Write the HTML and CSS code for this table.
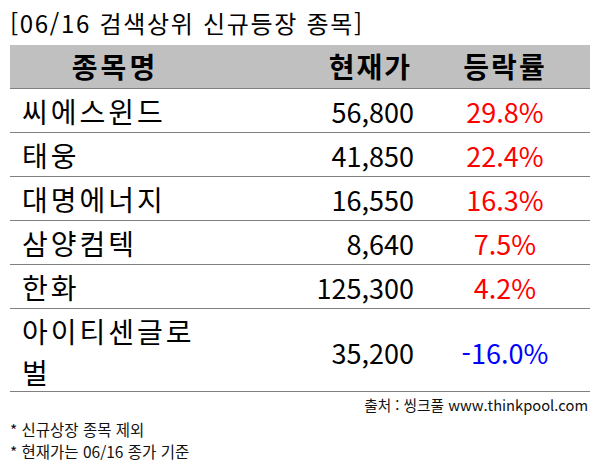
FILE: index.html
```html
<!DOCTYPE html>
<html lang="ko">
<head>
<meta charset="utf-8">
<link rel="stylesheet" href="styles.css">
</head>
<body>
<div class="page">
  <div class="title">[06/16 검색상위 신규등장 종목]</div>
  <div class="table">
    <div class="row head">
      <div class="c name">종목명</div>
      <div class="c price">현재가</div>
      <div class="c pct">등락률</div>
    </div>
    <div class="row">
      <div class="c name">씨에스윈드</div>
      <div class="c price">56,800</div>
      <div class="c pct up">29.8%</div>
    </div>
    <div class="row">
      <div class="c name">태웅</div>
      <div class="c price">41,850</div>
      <div class="c pct up">22.4%</div>
    </div>
    <div class="row">
      <div class="c name">대명에너지</div>
      <div class="c price">16,550</div>
      <div class="c pct up">16.3%</div>
    </div>
    <div class="row">
      <div class="c name">삼양컴텍</div>
      <div class="c price">8,640</div>
      <div class="c pct up">7.5%</div>
    </div>
    <div class="row">
      <div class="c name">한화</div>
      <div class="c price">125,300</div>
      <div class="c pct up">4.2%</div>
    </div>
    <div class="row tall">
      <div class="c name">아이티센글로벌</div>
      <div class="c price">35,200</div>
      <div class="c pct down">-16.0%</div>
    </div>
  </div>
  <div class="source">출처 : 씽크풀 www.thinkpool.com</div>
  <div class="notes">
    <div>* 신규상장 종목 제외</div>
    <div>* 현재가는 06/16 종가 기준</div>
  </div>
</div>
</body>
</html>
```
FILE: styles.css
```css
* { box-sizing: border-box; }
html, body { margin: 0; padding: 0; background: #ffffff; }
body {
  width: 600px;
  height: 467px;
  overflow: hidden;
  font-family: "Noto Sans CJK KR", "Noto Sans", sans-serif;
  color: #000;
}
.page {
  padding: 0 10px;
}
.title {
  font-size: 24px;
  line-height: 45px;
  height: 45px;
  letter-spacing: 1.7px;
  white-space: nowrap;
}
.table {
  width: 580px;
}
.row {
  display: grid;
  grid-template-columns: 210px 200px 170px;
  height: 44px;
  border-bottom: 1px solid #808080;
  align-items: center;
  font-size: 27px;
}
.row.head {
  background: #c0c0c0;
  font-weight: bold;
}
.row.tall {
  height: 83px;
}
.c { line-height: 41px; padding-top: 2px; }
.head .c { padding-top: 0; }
.name {
  font-size: 28px;
  letter-spacing: 3px;
  padding-left: 12px;
  padding-right: 22px;
}
.head .name {
  text-align: center;
  padding: 0;
}
.price {
  text-align: right;
  padding-right: 6px;
}
.head .price { padding-right: 8px; letter-spacing: 2px; font-size: 28px; }
.pct {
  text-align: center;
}
.head .pct { letter-spacing: 2px; font-size: 28px; }
.up { color: #ff0000; }
.down { color: #0000ff; }
.source {
  text-align: right;
  font-size: 14.7px;
  line-height: 26px;
  color: #111;
  padding-right: 2px;
}
.notes {
  margin-top: 0;
  font-size: 15.5px;
  line-height: 22px;
  color: #111;
}
```
